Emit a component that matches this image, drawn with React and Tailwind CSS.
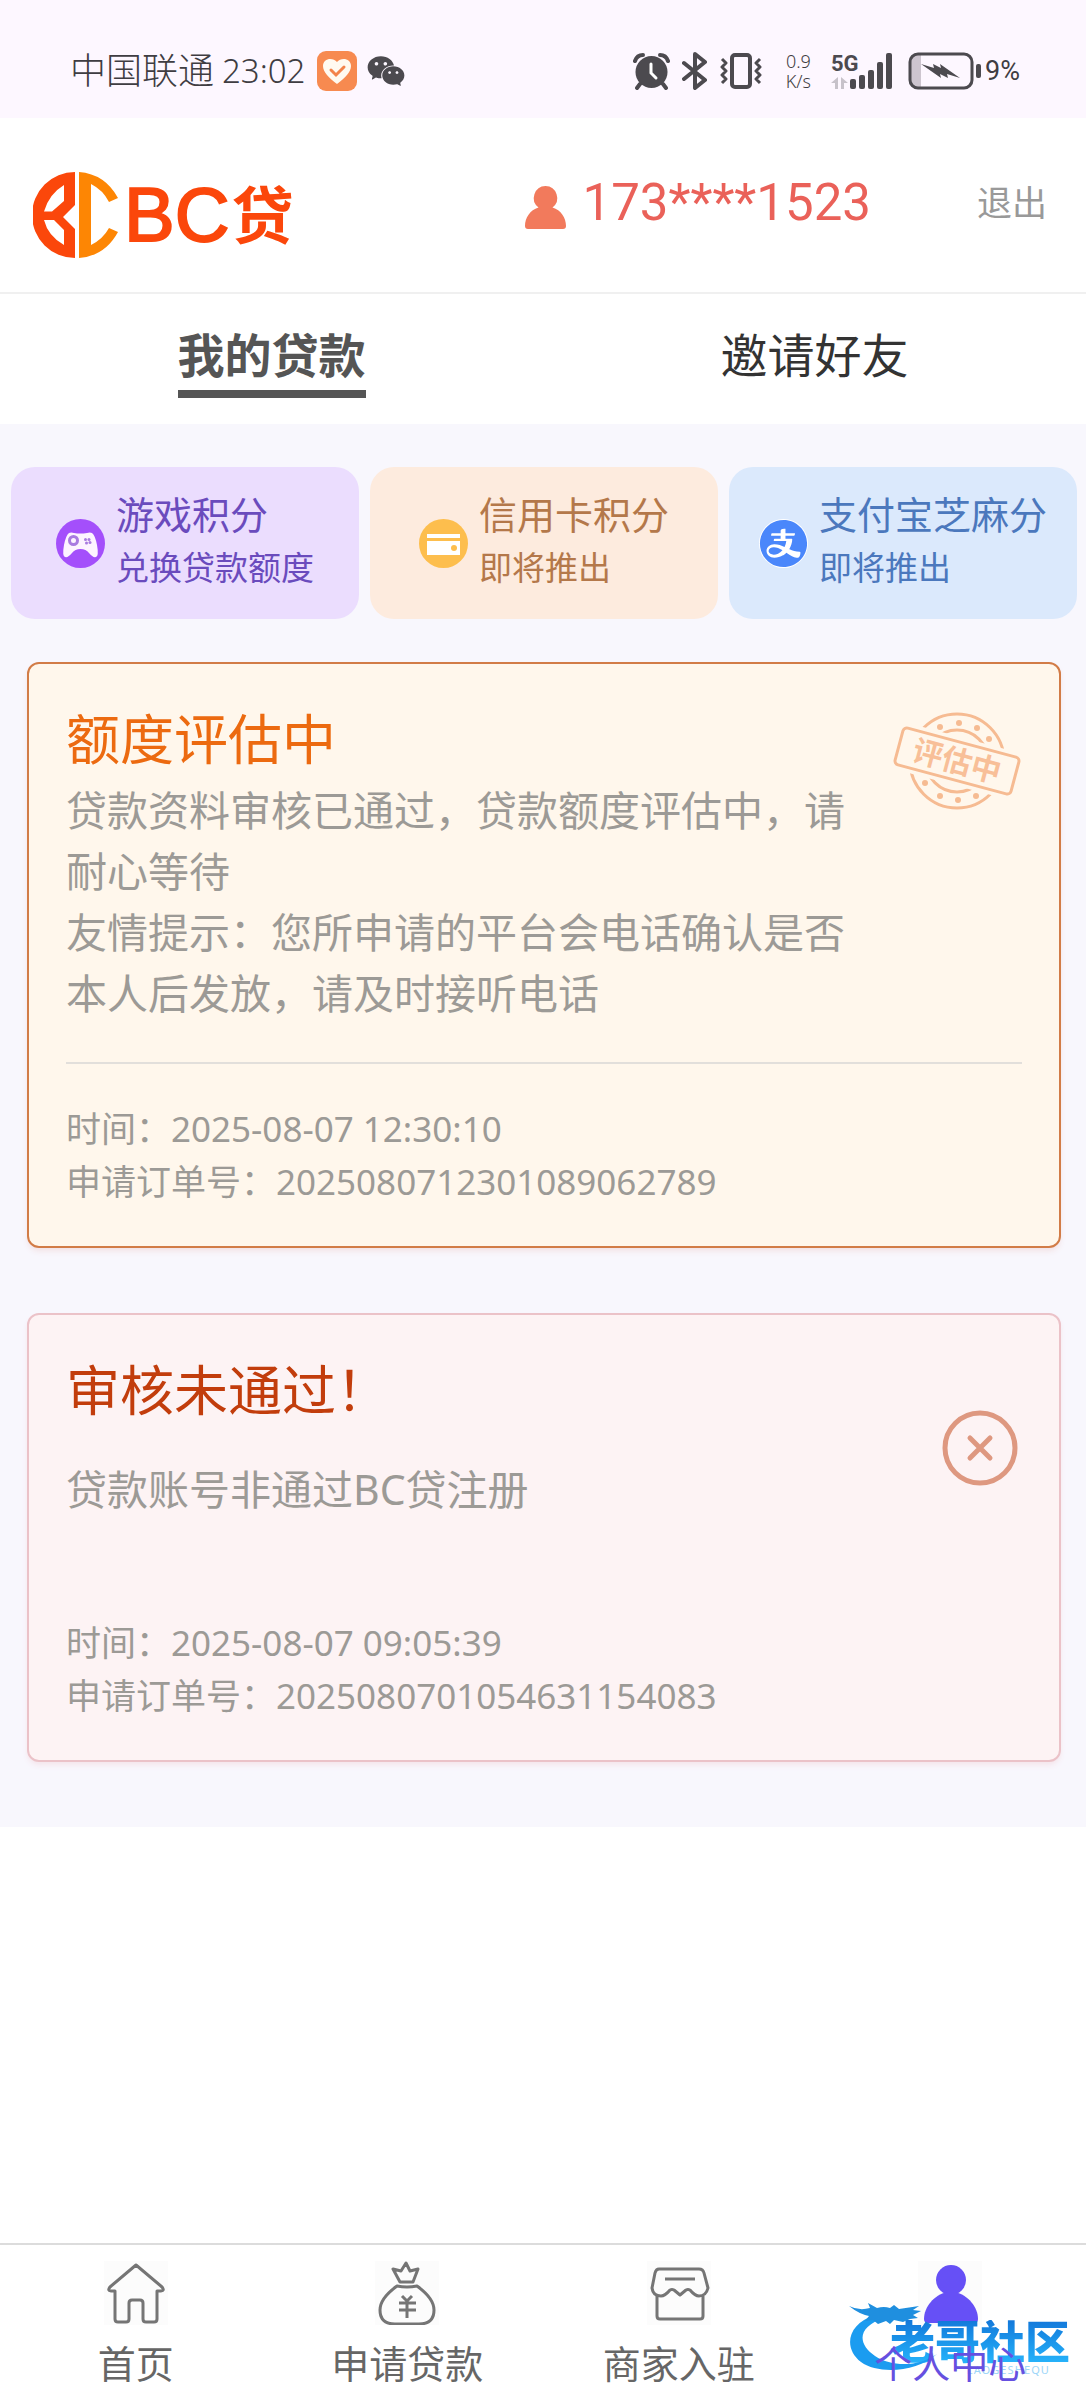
import { useState } from "react";
import { AiFillAlipayCircle, AiFillWechat } from "react-icons/ai";

const tabs = ["我的贷款", "邀请好友"];

const chips = [
    {
        title: "游戏积分",
        note: "兑换贷款额度",
        box: "bg-[#ebddfe] text-[#6a4bbd]",
        icon: <GameIcon />,
    },
    {
        title: "信用卡积分",
        note: "即将推出",
        box: "bg-[#fdebde] text-[#b4784a]",
        icon: <CardIcon />,
    },
    {
        title: "支付宝芝麻分",
        note: "即将推出",
        box: "bg-[#dbe9fc] text-[#4b78bd]",
        icon: (
            <span className="block rounded-full bg-white">
                <AiFillAlipayCircle size={49} color="#4a87fb" className="scale-110" />
            </span>
        ),
    },
];

const navItems = [
    { label: "首页", icon: <HomeIcon /> },
    { label: "申请贷款", icon: <MoneyBagIcon /> },
    { label: "商家入驻", icon: <ShopIcon /> },
    { label: "个人中心", icon: <UserIcon />, active: true },
];

function LogoMark() {
    return (
        <svg width="85" height="86" viewBox="0 0 85 86" aria-hidden="true">
            <path
                fill="#fb470b"
                fillRule="evenodd"
                d="M42 0A43 43 0 0 0 42 86V57L30 45L42 33ZM31 13V29L19 39.500H11Q16 22 31 13ZM11 48H21L31 58V73Q15 64 11 48Z"
            />
            <path
                fill="#fd8604"
                d="M46 0Q72 2 85 26L76 30Q70 18 58 12V73Q70 67 76 56L85 60Q72 84 46 86Z"
            />
        </svg>
    );
}

function PersonIcon() {
    return (
        <svg width="41" height="43" viewBox="0 0 41 43" fill="#f27a5c" aria-hidden="true">
            <path d="M20.500 0a12 12 0 0 1 7 21.500C36 24 41 32 41 40q0 3-3 3H3q-3 0-3-3C0 32 5 24 13.500 21.500A12 12 0 0 1 20.500 0Z" />
        </svg>
    );
}

function HeartBadge() {
    return (
        <svg width="40" height="40" viewBox="0 0 40 40" aria-hidden="true">
            <rect width="40" height="40" rx="9" fill="#f78a50" />
            <path d="M20 33C12 27 6 21 6 15c0-8 10-9 14-4 4-5 14-4 14 4 0 6-6 12-14 18Z" fill="#fffaf0" />
            <path d="m14 19 5 5 8-8" fill="none" stroke="#f3834a" strokeWidth="3" strokeLinecap="round" />
        </svg>
    );
}

function AlarmIcon() {
    return (
        <svg width="37" height="37" viewBox="0 0 37 37" aria-hidden="true">
            <circle cx="18.500" cy="19" r="16" fill="#4c4a4f" />
            <path
                d="M2 8q2-6 8-6M35 8q-2-6-8-6M7 31l-3 4M30 31l3 4"
                fill="none"
                stroke="#4c4a4f"
                strokeWidth="4"
                strokeLinecap="round"
            />
            <path d="M18 11v9l5 5" fill="none" stroke="#fff" strokeWidth="3" strokeLinecap="round" />
        </svg>
    );
}

function BluetoothIcon() {
    return (
        <svg width="26" height="38" viewBox="0 0 26 38" aria-hidden="true">
            <path
                d="M2 11 23 28 13 36V2L23 10 2 27"
                fill="none"
                stroke="#4c4a4f"
                strokeWidth="4"
                strokeLinecap="round"
                strokeLinejoin="round"
            />
        </svg>
    );
}

function VibrateIcon() {
    return (
        <svg width="42" height="38" viewBox="0 0 42 38" fill="none" stroke="#4c4a4f" aria-hidden="true">
            <rect x="12" y="3" width="18" height="32" rx="3" strokeWidth="4" />
            <path d="m2 7 4 4-4 4 4 4-4 4 4 4-4 4M40 7l-4 4 4 4-4 4 4 4-4 4 4 4" strokeWidth="3" strokeLinejoin="round" />
        </svg>
    );
}

function SignalIcon() {
    return (
        <svg width="61" height="38" viewBox="0 0 61 38" aria-hidden="true">
            <path d="M0 31 7 25V37H4V31ZM10 37V25L17 31H13V37Z" fill="#c7c2ca" />
            <g fill="#4c4a4f">
                <rect x="19" y="27" width="6" height="10" rx="2" />
                <rect x="28" y="23" width="6" height="14" rx="2" />
                <rect x="37" y="18" width="6" height="19" rx="2" />
                <rect x="46" y="10" width="6" height="27" rx="2" />
                <rect x="55" y="1" width="6" height="36" rx="2" />
            </g>
            <text x="0" y="19" fontSize="22" fontWeight="700" fill="#4c4a4f" fontFamily="Roboto, sans-serif">
                5G
            </text>
        </svg>
    );
}

function BatteryIcon() {
    return (
        <svg width="73" height="38" viewBox="0 0 73 38" aria-hidden="true">
            <path d="M10 3H13V35H10Q3 35 3 28V10Q3 3 10 3Z" fill="#cdc5cf" />
            <rect x="2" y="2" width="62" height="34" rx="8" fill="none" stroke="#4c4a4f" strokeWidth="3" />
            <path d="m13 12 13 4-1-4 8 4-1-4 20 14-13-4 1 4-8-4 1 4Z" fill="#4c4a4f" />
            <rect x="68" y="12" width="5" height="14" rx="2" fill="#4c4a4f" />
        </svg>
    );
}

function GameIcon() {
    return (
        <svg width="49" height="49" viewBox="0 0 49 49" aria-hidden="true">
            <circle cx="24.500" cy="24.500" r="24.500" fill="#a44ffb" />
            <path
                d="M13 14q2-1 5 0 6 1 13 0 3-1 5 0 3 2 5 12 2 11-1 12-3 1-7-4-3-4-8.500-4T16 34q-4 5-7 4-3-1-1-12 2-10 5-12Z"
                fill="#fdf3ff"
            />
            <circle cx="17.500" cy="21.500" r="4" fill="none" stroke="#a97ae0" strokeWidth="3" />
            <g fill="#a97ae0">
                <circle cx="29.500" cy="20.500" r="1.500" />
                <circle cx="33" cy="20.500" r="1.500" />
                <circle cx="30.500" cy="24" r="1.500" />
                <circle cx="34" cy="23.500" r="1.500" />
            </g>
        </svg>
    );
}

function CardIcon() {
    return (
        <svg width="49" height="49" viewBox="0 0 49 49" aria-hidden="true">
            <circle cx="24.500" cy="24.500" r="24.500" fill="#fdbe4d" />
            <path d="M8 15h33v4H8ZM8 22h33v14H8Z" fill="#fff" />
            <circle cx="35" cy="29" r="3" fill="#fdbe4d" />
        </svg>
    );
}

function Stamp() {
    return (
        <svg width="130" height="98" viewBox="0 0 130 98" fill="none" stroke="#f6bb92" strokeWidth="3" aria-label="评估中">
            <circle cx="65" cy="49" r="47" />
            <circle cx="65" cy="49" r="31" />
            <g fill="#f6bb92" stroke="none">
                <circle cx="48" cy="15" r="3" />
                <circle cx="67" cy="11" r="3" />
                <circle cx="85" cy="16" r="3" />
                <circle cx="97" cy="27" r="3" />
                <circle cx="33" cy="71" r="3" />
                <circle cx="48" cy="84" r="3" />
                <circle cx="66" cy="88" r="3" />
                <circle cx="84" cy="84" r="3" />
            </g>
            <g transform="rotate(15 65 49)">
                <rect x="1" y="25" width="128" height="48" fill="#fff7ec" stroke="none" />
                <rect x="5" y="30" width="120" height="38" rx="4" />
                <text
                    x="65"
                    y="60"
                    fontSize="30"
                    fontWeight="700"
                    textAnchor="middle"
                    fill="#f8bf98"
                    stroke="none"
                    fontFamily="Noto Sans CJK SC, sans-serif"
                >
                    评估中
                </text>
            </g>
        </svg>
    );
}

function RejectedIcon() {
    return (
        <svg width="76" height="76" viewBox="0 0 76 76" fill="none" stroke="#de9880" strokeWidth="5" aria-hidden="true">
            <circle cx="38" cy="38" r="35" />
            <path d="m28 28 20 20M48 28 28 48" strokeLinecap="round" />
        </svg>
    );
}

function HomeIcon() {
    return (
        <svg width="64" height="64" viewBox="0 0 64 64" fill="none" stroke="#757575" strokeWidth="3" strokeLinejoin="round" aria-hidden="true">
            <path d="M32 4 58 26q3 4-1 4H53V58q0 3-3 3H42q-3 0-3-3V42q0-3-3-3H28q-3 0-3 3V58q0 3-3 3H14q-3 0-3-3V30H7q-4 0-1-4Z" />
        </svg>
    );
}

function MoneyBagIcon() {
    return (
        <svg width="64" height="64" viewBox="-1 0 64 64" fill="none" stroke="#757575" strokeWidth="3" strokeLinejoin="round" aria-hidden="true">
            <path d="M24 21 17 8l8 2 5-8 4 8 8-2-5 13Z" />
            <path d="M21 25q10 2 20 0C52 33 58 41 58 49q0 14-15 14H19Q4 63 4 49C4 41 10 33 21 25Z" />
            <path d="m26 35 5 5 5-5M23 42h17M23 49h17M31 40v17" />
        </svg>
    );
}

function ShopIcon() {
    return (
        <svg width="64" height="64" viewBox="0 0 64 64" fill="none" stroke="#757575" strokeWidth="3" strokeLinejoin="round" aria-hidden="true">
            <path d="M12 8H52q4 0 5 4l4 15q-2 8-9 8-4 0-9-6-2-1-4 0l-6 5-6-5q-2-1-4 0-5 6-9 6-8 0-9-8L8 12q1-4 4-4Z" />
            <path d="M10 35V55q0 3 3 3H53q3 0 3-3V35M18 18H48" />
        </svg>
    );
}

function UserIcon() {
    return (
        <svg width="64" height="64" viewBox="0 0 64 64" fill="#6650f6" aria-hidden="true">
            <circle cx="33" cy="19" r="15" />
            <path d="M29 31h8C50 34 60 46 60 58q0 4-4 4H10q-4 0-4-4C6 46 16 34 29 31Z" />
        </svg>
    );
}

function Watermark() {
    return (
        <div className="pointer-events-none absolute right-4 bottom-6 flex h-[74px] w-[221px] items-end justify-end">
            <svg width="90" height="72" viewBox="0 0 90 72" className="absolute top-0 left-0" aria-hidden="true">
                <path
                    d="M26 13C-2 22-6 46 12 60c18 13 56 10 76-8C72 64 44 66 26 54 8 42 8 24 36 16Z"
                    fill="#1b9cf0"
                />
                <path
                    d="M0 4q10 5 21 2l-2-5 9 5q7-2 13 0l4-3 5 4 20-3-6 4 8 1-8 4 5 3-8 1-7 3-9-2-4 4-4-3-8 3-5-4-8 1 4-5Q10 12 0 4Z"
                    fill="#1f8fdf"
                />
            </svg>
            <div className="flex flex-col items-end">
                <span className="bg-gradient-to-b from-[#1478da] to-[#27b4fb] bg-clip-text text-[45px] leading-[44px] font-black text-transparent">
                    老哥社区
                </span>
                <span className="pr-5 text-[11px] leading-3 tracking-widest text-[#9dd6f8]">LAOGESHEQU</span>
            </div>
        </div>
    );
}

function StatusBar() {
    return (
        <div className="flex h-[118px] items-center justify-between bg-[#fdf7ff] pt-6 pr-[66px] pl-[70px] font-light text-[#3f3d42]">
            <div className="flex items-center">
                <span className="text-[36px]">中国联通</span>
                <span className="ml-2 text-[33px]">23:02</span>
                <span className="ml-3">
                    <HeartBadge />
                </span>
                <AiFillWechat size={42} color="#4c4a4f" className="ml-2" />
            </div>
            <div className="flex items-center">
                <AlarmIcon />
                <span className="ml-3">
                    <BluetoothIcon />
                </span>
                <span className="ml-3">
                    <VibrateIcon />
                </span>
                <span className="mr-5 ml-6 text-center text-[18px] leading-5">
                    0.9
                    <br />
                    K/s
                </span>
                <SignalIcon />
                <span className="ml-4">
                    <BatteryIcon />
                </span>
                <span className="ml-1 font-[Roboto] text-[27px] font-normal">9%</span>
            </div>
        </div>
    );
}

function OrderMeta({ time, order }) {
    return (
        <div className="text-[35px] leading-[53px] text-[#9c9a96]">
            <p>时间：{time}</p>
            <p>申请订单号：{order}</p>
        </div>
    );
}

export default function App() {
    const [tab, setTab] = useState(0);

    return (
        <div className="flex min-h-screen flex-col bg-white font-['Noto_Sans','Noto_Sans_CJK_SC',sans-serif]">
            <StatusBar />

            {/* Header */}
            <header className="flex items-center justify-between border-b-2 border-[#f0f0f0] pr-[39px] pb-1 pl-[33px]">
                <a href="#" className="flex items-center gap-[6px] pt-[52px] pb-7 text-[#fb470b]">
                    <LogoMark />
                    <span className="flex items-center gap-[2px] leading-[90px]">
                        <span className="font-['Liberation_Sans'] text-[76px] [-webkit-text-stroke:2px_#fb470b]">BC</span>
                        <span className="text-[62px] font-bold">贷</span>
                    </span>
                </a>
                <div className="flex items-center">
                    <span className="pt-2">
                        <PersonIcon />
                    </span>
                    <span className="ml-4 font-[Roboto] text-[51px] leading-[60px] text-[#ea6159]">173****1523</span>
                    <button type="button" className="ml-[106px] text-[35px] text-[#999]">
                        退出
                    </button>
                </div>
            </header>

            {/* Tabs */}
            <div className="flex">
                {tabs.map((name, i) => (
                    <button
                        key={name}
                        type="button"
                        onClick={() => setTab(i)}
                        className="flex flex-1 justify-center py-[26px] text-[47px] leading-[70px]"
                    >
                        <span
                            className={
                                tab === i
                                    ? "border-b-8 border-[#555] font-bold text-[#555]"
                                    : "border-b-8 border-transparent text-[#333]"
                            }
                        >
                            {name}
                        </span>
                    </button>
                ))}
            </div>

            <main className="bg-[#f8f7fd] pt-[43px] pb-[65px]">
                {/* Credit sources */}
                <div className="grid grid-cols-3 gap-[11px] pr-[9px] pl-[11px]">
                    {chips.map((chip) => (
                        <button
                            key={chip.title}
                            type="button"
                            className={`flex h-[152px] items-center justify-center gap-[11px] rounded-3xl text-left ${chip.box}`}
                        >
                            {chip.icon}
                            <span className="flex flex-col pb-1 whitespace-nowrap">
                                <span className="text-[38px] leading-[54px]">{chip.title}</span>
                                <span className="text-[33px] leading-[54px]">{chip.note}</span>
                            </span>
                        </button>
                    ))}
                </div>

                <div className="mt-[43px] flex flex-col gap-[65px] pr-[25px] pl-[27px]">
                    {/* Under assessment */}
                    <section className="rounded-xl border-2 border-[#d27c47] bg-[#fff7ec] px-[37px] pt-11 pb-[38px] shadow-md shadow-[#f3e3e6]">
                        <div className="flex items-start justify-between">
                            <div className="w-[790px]">
                                <h2 className="text-[54px] leading-[62px] text-[#ec6a10]">额度评估中</h2>
                                <div className="mt-[10px] text-[41px] leading-[61px] text-[#9c9a96]">
                                    <p>贷款资料审核已通过，贷款额度评估中，请耐心等待</p>
                                    <p>友情提示：您所申请的平台会电话确认是否本人后发放，请及时接听电话</p>
                                </div>
                            </div>
                            <span className="pt-1">
                                <Stamp />
                            </span>
                        </div>
                        <hr className="my-[38px] border-t-2 border-[#e2dfdb]" />
                        <OrderMeta time="2025-08-07 12:30:10" order="2025080712301089062789" />
                    </section>

                    {/* Rejected */}
                    <section className="rounded-xl border-2 border-[#ebc2c8] bg-[#fdf3f4] px-[37px] pt-11 pb-[38px] shadow-md shadow-[#f5e6ec]">
                        <div className="flex items-center justify-between pr-1">
                            <div>
                                <h2 className="text-[54px] leading-[62px] text-[#c23d0c]">审核未通过！</h2>
                                <p className="mt-[38px] text-[41px] leading-[61px] text-[#9c9a96]">贷款账号非通过BC贷注册</p>
                            </div>
                            <span className="pt-4">
                                <RejectedIcon />
                            </span>
                        </div>
                        <div className="mt-24">
                            <OrderMeta time="2025-08-07 09:05:39" order="2025080701054631154083" />
                        </div>
                    </section>
                </div>
            </main>

            {/* Bottom navigation */}
            <nav className="sticky bottom-0 mt-auto flex h-[157px] border-t-2 border-[#dcdcdc] bg-white">
                {navItems.map((item) => (
                    <a
                        key={item.label}
                        href="#"
                        className={
                            item.active
                                ? "relative flex flex-1 flex-col items-center pt-4 text-[#6650e0]"
                                : "flex flex-1 flex-col items-center pt-4 text-[#666]"
                        }
                    >
                        <span className="bg-[#fcfcfc]">{item.icon}</span>
                        {item.active && <Watermark />}
                        <span className="relative mt-2 text-[38px] leading-[60px]">{item.label}</span>
                    </a>
                ))}
            </nav>
        </div>
    );
}
